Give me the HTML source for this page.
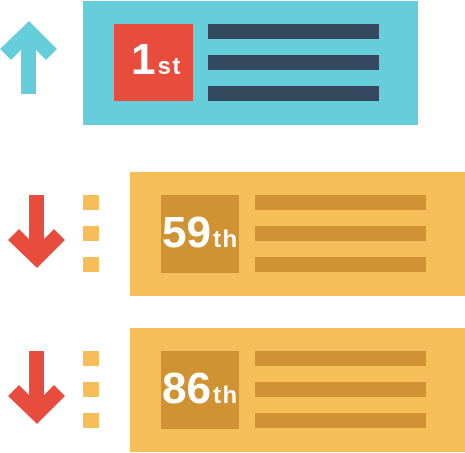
<!DOCTYPE html><html><head><style>
body{margin:0;width:465px;height:453px;background:#fff;position:relative;overflow:hidden;font-family:"Liberation Sans",sans-serif}
div{position:absolute}
.t{color:#fff;font-weight:bold;white-space:nowrap;line-height:1;font-size:44px}
.t span{font-size:24px;letter-spacing:1.5px;margin-left:2px}
</style></head><body>
<svg width="465" height="453" style="position:absolute;left:0;top:0">
<rect x="83" y="1" width="335" height="124" fill="#66CEDB"/>
<rect x="114" y="24" width="79" height="77" fill="#E84C3D"/>
<rect x="208" y="24" width="171" height="15" fill="#34495E"/>
<rect x="208" y="55" width="171" height="15" fill="#34495E"/>
<rect x="208" y="86" width="171" height="15" fill="#34495E"/>
<path d="M29 21 L57 49 L46 60 L36 50 L36 94 L21 94 L21 50 L11 60 L0 49 Z" fill="#66CEDB"/>

<rect x="130" y="172" width="335" height="124" fill="#F5BE59"/>
<rect x="161" y="195" width="78" height="78" fill="#D09333"/>
<rect x="255" y="195" width="171" height="15" fill="#D09333"/>
<rect x="255" y="226" width="171" height="15" fill="#D09333"/>
<rect x="255" y="257" width="171" height="15" fill="#D09333"/>
<rect x="83" y="195" width="16" height="15" fill="#F5BE59"/>
<rect x="83" y="226" width="16" height="15" fill="#F5BE59"/>
<rect x="83" y="257" width="16" height="15" fill="#F5BE59"/>
<path d="M37 268 L65 240 L54 229 L44 239 L44 195 L29 195 L29 239 L19 229 L8 240 Z" fill="#E84C3D"/>

<rect x="130" y="328" width="335" height="124" fill="#F5BE59"/>
<rect x="161" y="351" width="78" height="78" fill="#D09333"/>
<rect x="255" y="351" width="171" height="15" fill="#D09333"/>
<rect x="255" y="382" width="171" height="15" fill="#D09333"/>
<rect x="255" y="413" width="171" height="15" fill="#D09333"/>
<rect x="83" y="351" width="16" height="15" fill="#F5BE59"/>
<rect x="83" y="382" width="16" height="15" fill="#F5BE59"/>
<rect x="83" y="413" width="16" height="15" fill="#F5BE59"/>
<path d="M37 424 L65 396 L54 385 L44 395 L44 351 L29 351 L29 395 L19 385 L8 396 Z" fill="#E84C3D"/>
</svg>
<div class="t" style="left:131px;top:38px">1<span>st</span></div>
<div class="t" style="left:162px;top:211px">59<span>th</span></div>
<div class="t" style="left:162px;top:367px">86<span>th</span></div>
</body></html>
